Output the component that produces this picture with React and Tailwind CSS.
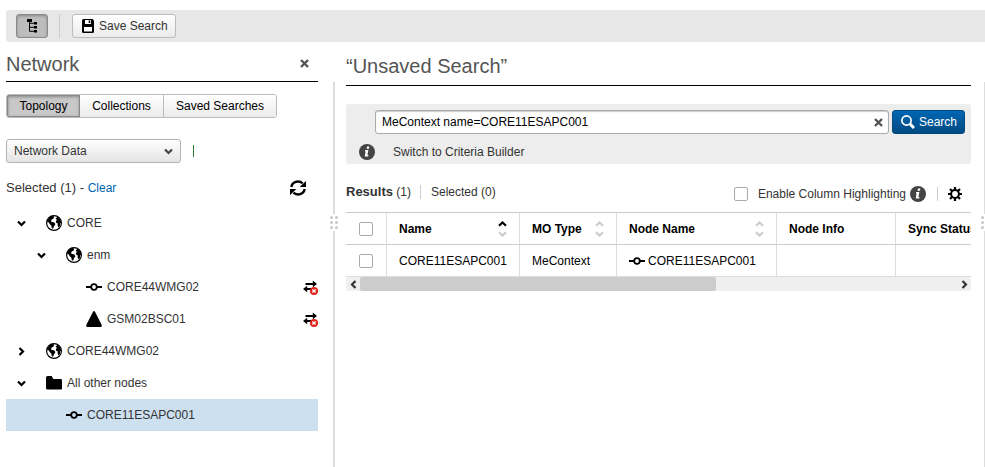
const Globe = () => (
  <svg width="16" height="16" viewBox="0 0 16 16" className="shrink-0" aria-hidden="true">
    <circle cx="8" cy="8" r="7.4" fill="#fff" stroke="#000" strokeWidth="1.2" />
    <path d="M1.6 5 L3.4 2.2 L6.2 .8 L8.2 1.6 L7.6 3.4 L5.8 4.6 L4.8 6.2 L6.2 7 L8.4 7.6 L9.4 9.2 L8 11.2 L7.2 13.6 L5.8 13.4 L5.4 10.8 L3.8 9.2 L2.6 7.2 L1 7 Z" />
    <path d="M9.6 3.6 L11.6 1.8 L14.4 4.4 L15.2 7.2 L14.2 8.4 L14 11 L12.6 12.6 L11.6 10.4 L11.8 8.6 L10.2 7.8 L9.8 6 L11 5 Z" />
  </svg>
);

const NodeIcon = () => (
  <svg width="16" height="16" viewBox="0 0 16 16" className="shrink-0" fill="none" stroke="#000" aria-hidden="true">
    <path d="M0 8h5M11 8h5" strokeWidth="1.8" />
    <circle cx="8" cy="8" r="2.8" strokeWidth="1.8" />
  </svg>
);

const Triangle = () => (
  <svg width="16" height="16" viewBox="0 0 16 16" className="shrink-0" aria-hidden="true">
    <path d="M7 .8Q8-.6 9 .8L15.5 13.6Q16.2 16 14.8 16H1.2Q-.2 16 .5 13.6Z" />
  </svg>
);

const Folder = () => (
  <svg width="16" height="16" viewBox="0 0 16 16" className="shrink-0" aria-hidden="true">
    <path d="M0 2.6Q0 1 1.6 1H5.6L7.4 4H14.6Q16 4 16 5.4V13.4Q16 14.6 14.4 14.6H1.6Q0 14.6 0 13Z" />
  </svg>
);

const Chevron = ({ d = "M1 2.5 4.5 6 8 2.5", color = "#000" }) => (
  <svg width="9" height="9" viewBox="0 0 9 9" className="shrink-0" fill="none" stroke={color} strokeWidth="2.2" aria-hidden="true">
    <path d={d} />
  </svg>
);
const RIGHT = "M2.5 1 6 4.5 2.5 8";
const LEFT = "M6.5 1 3 4.5 6.5 8";

const Cross = () => (
  <svg width="9" height="9" viewBox="0 0 9 9" fill="none" stroke="#555" strokeWidth="2.4" aria-hidden="true">
    <path d="M1 1 8 8M8 1 1 8" />
  </svg>
);

const SyncError = () => (
  <svg width="16" height="18" viewBox="0 0 16 18" className="shrink-0" aria-label="Not synchronized" role="img">
    <path d="M3.5 5h7.3V2.6L15 6l-4.2 3.3V7H3.5zM12 10H5.2V7.8L1 11l4.2 3.2V12H12z" />
    <circle cx="12" cy="13" r="4" fill="#e32119" />
    <path d="M10.4 11.4 13.6 14.6M13.6 11.4 10.4 14.6" stroke="#fff" strokeWidth="1.4" />
  </svg>
);

const Info = () => (
  <svg width="16" height="16" viewBox="0 0 16 16" className="shrink-0" aria-label="Information" role="img">
    <circle cx="8" cy="8" r="8" fill="#444" />
    <path d="M8 2.6h2.4l-.4 2.2H7.6zM6.2 6h3.2l-1 5h1.1l-.3 1.6H5.7l.9-5H5.9z" fill="#fff" />
  </svg>
);

const Grip = () => (
  <div className="grid shrink-0 grid-cols-2 gap-[2px] py-[2px]">
    {[0, 1, 2, 3, 4, 5].map((i) => (
      <span key={i} className="size-[3px] rounded-full bg-[#c8c8c8]" />
    ))}
  </div>
);

const Splitter = () => (
  <div className="flex w-2 shrink-0 flex-col items-center">
    <div className="h-[132px] w-[2px] bg-[#ddd]" />
    <Grip />
    <div className="w-[2px] grow bg-[#ddd]" />
  </div>
);

const Check = ({ label }) => (
  <input
    type="checkbox"
    aria-label={label}
    className="block size-[14px] shrink-0 appearance-none rounded-[2px] border border-[#aaa] bg-white"
  />
);

const ICONS = { globe: Globe, node: NodeIcon, triangle: Triangle, folder: Folder };

const TREE = [
  { name: "CORE", icon: "globe", pad: "pl-[11px]", arrow: "down" },
  { name: "enm", icon: "globe", pad: "pl-[31px]", arrow: "down" },
  { name: "CORE44WMG02", icon: "node", pad: "pl-[51px]", error: true },
  { name: "GSM02BSC01", icon: "triangle", pad: "pl-[51px]", error: true },
  { name: "CORE44WMG02", icon: "globe", pad: "pl-[11px]", arrow: "right" },
  { name: "All other nodes", icon: "folder", pad: "pl-[11px]", arrow: "down" },
  { name: "CORE11ESAPC001", icon: "node", pad: "pl-[31px]", selected: true },
];

function TreeRow({ item }) {
  const Icon = ICONS[item.icon];
  return (
    <li className={`flex h-8 items-center ${item.pad} ${item.selected ? "bg-[#cde0f0]" : ""}`}>
      {item.arrow ? (
        <button type="button" aria-label={`Toggle ${item.name}`} className="mr-5 shrink-0">
          <Chevron d={item.arrow === "right" ? RIGHT : undefined} />
        </button>
      ) : (
        <span className="mr-5 w-[9px] shrink-0" />
      )}
      <Icon />
      <span className="ml-[5px] grow">{item.name}</span>
      {item.error && <SyncError />}
    </li>
  );
}

const Sort = ({ asc }) => (
  <svg width="9" height="16" viewBox="0 0 9 16" className="shrink-0" fill="none" strokeWidth="2.2" aria-hidden="true">
    <path d="M1 4.8 4.5 1.5 8 4.8" stroke={asc ? "#000" : "#ccc"} />
    <path d="M1 11.2 4.5 14.5 8 11.2" stroke="#ccc" />
  </svg>
);

const COLUMNS = [
  { name: "Name", sort: true, asc: true },
  { name: "MO Type", sort: true },
  { name: "Node Name", sort: true },
  { name: "Node Info" },
  { name: "Sync Status" },
];

function Sidebar() {
  return (
    <aside className="mr-3 w-[312px] shrink-0">
      <div className="flex h-10 items-center justify-between border-b border-black pt-1 pr-[9px]">
        <h1 className="text-xl leading-6 text-[#555]">Network</h1>
        <button type="button" aria-label="Close"><Cross /></button>
      </div>
      <div className="mt-3 flex h-6 w-[271px] overflow-hidden rounded-[3px] border border-[#bbb] text-black">
        <button type="button" className="w-[73px] border border-[#888] bg-[#c8c8c8] shadow-[inset_0_1px_3px_#888]">Topology</button>
        <button type="button" className="w-[84px] border-r border-[#bbb] bg-linear-to-b from-white to-[#ebebeb]">Collections</button>
        <button type="button" className="grow bg-linear-to-b from-white to-[#ebebeb]">Saved Searches</button>
      </div>
      <div className="mt-[21px] flex items-center">
        <div className="grid w-[175px] items-center">
          <select aria-label="Network data" className="col-start-1 row-start-1 h-6 w-full appearance-none rounded-[3px] border border-[#b3b3b3] bg-linear-to-b from-white to-[#e4e4e4] pl-[7px]">
            <option>Network Data</option>
          </select>
          <span className="pointer-events-none col-start-1 row-start-1 mr-2 justify-self-end"><Chevron color="#444" /></span>
        </div>
        <span className="ml-3 h-3 w-px bg-[#2f7d32]" />
      </div>
      <div className="mt-4 flex h-[18px] items-center justify-between pr-3">
        <p className="text-[13px]">Selected (1) - <a href="#clear" className="text-xs text-[#0066b3]">Clear</a></p>
        <button type="button" aria-label="Refresh">
          <svg width="16" height="16" viewBox="0 0 16 16" aria-hidden="true">
            <path d="M1.4 7A6.6 6 0 0 1 12.6 3.3" fill="none" stroke="#000" strokeWidth="2.4" />
            <path d="M16 1V7H9.6z" />
            <path d="M14.6 9A6.6 6 0 0 1 3.4 12.7" fill="none" stroke="#000" strokeWidth="2.4" />
            <path d="M0 15V9H6.4z" />
          </svg>
        </button>
      </div>
      <ul className="mt-[10px]">
        {TREE.map((item, i) => <TreeRow key={i} item={item} />)}
      </ul>
    </aside>
  );
}

function Results() {
  return (
    <main className="mr-[10px] ml-2 min-w-0 grow">
      <div className="flex h-11 items-center border-b border-black pt-1">
        <h2 className="text-xl leading-6 text-[#555]">“Unsaved Search”</h2>
      </div>
      <form className="mt-[18px] h-[60px] rounded-[3px] bg-[#ededed] pt-[6px] pr-[6px]" onSubmit={(e) => e.preventDefault()}>
        <div className="flex gap-[3px] pl-[29px]">
          <div className="flex h-6 grow items-center rounded-[3px] border border-[#aaa] bg-white pr-[5px] shadow-[inset_0_1px_1px_#ccc]">
            <input aria-label="Search query" defaultValue="MeContext name=CORE11ESAPC001" className="min-w-0 grow bg-transparent pl-[6px] text-black outline-none" />
            <button type="button" aria-label="Clear search"><Cross /></button>
          </div>
          <button type="submit" className="flex h-6 w-[73px] items-center gap-1 rounded-[3px] border border-[#004a80] bg-linear-to-b from-[#0066b3] to-[#004a82] pl-2 text-white">
            <svg width="14" height="14" viewBox="0 0 14 14" fill="none" stroke="#fff" aria-hidden="true">
              <circle cx="5.5" cy="5.5" r="4.6" strokeWidth="1.7" />
              <path d="M8.8 8.8 13 13" strokeWidth="3" />
            </svg>
            Search
          </button>
        </div>
        <div className="mt-[10px] flex items-center gap-[18px] pl-[13px]">
          <Info />
          <a href="#criteria">Switch to Criteria Builder</a>
        </div>
      </form>
      <div className="mt-[18px] flex h-[30px] items-center pb-[6px]">
        <p className="pb-1"><b className="text-[13px]">Results</b> (1)</p>
        <span className="mr-[10px] ml-[9px] mb-1 h-[14px] w-px bg-[#ccc]" />
        <p className="grow pb-1">Selected (0)</p>
        <label className="flex items-center gap-[10px]"><Check />Enable Column Highlighting</label>
        <span className="ml-1"><Info /></span>
        <span className="mr-[10px] ml-[11px] h-[14px] w-px bg-[#ccc]" />
        <button type="button" aria-label="Table settings" className="mr-[9px]">
          <svg width="14" height="14" viewBox="0 0 14 14" fill="none" stroke="#000" aria-hidden="true">
            <circle cx="7" cy="7" r="3.9" strokeWidth="2" />
            <path d="M7 0v3M7 11v3M0 7h3M11 7h3M2 2l2 2M10 10l2 2M12 2l-2 2M4 10l-2 2" strokeWidth="2.2" />
          </svg>
        </button>
      </div>
      <div className="overflow-hidden">
        <table className="w-[680px] table-fixed border-separate border-spacing-0 border-t border-[#ccc] text-left text-black">
          <colgroup>
            <col className="w-[41px]" />
            <col className="w-[133px]" />
            <col className="w-[97px]" />
            <col className="w-[160px]" />
            <col className="w-[119px]" />
            <col />
          </colgroup>
          <thead>
            <tr className="h-8">
              <th className="border-r border-b border-r-[#ddd] border-b-[#ccc] pl-[13px]"><Check label="Select all" /></th>
              {COLUMNS.map((c) => (
                <th key={c.name} className="border-r border-b border-r-[#ddd] border-b-[#ccc] pr-3 pl-3">
                  <span className="flex items-center justify-between whitespace-nowrap">{c.name}{c.sort && <Sort asc={c.asc} />}</span>
                </th>
              ))}
            </tr>
          </thead>
          <tbody>
            <tr className="h-8">
              <td className="border-r border-b border-[#ddd] pl-[13px]"><Check label="Select CORE11ESAPC001" /></td>
              <td className="border-r border-b border-[#ddd] pl-3">CORE11ESAPC001</td>
              <td className="border-r border-b border-[#ddd] pl-3">MeContext</td>
              <td className="border-r border-b border-[#ddd] pl-3">
                <span className="flex items-center gap-[3px]"><NodeIcon />CORE11ESAPC001</span>
              </td>
              <td className="border-r border-b border-[#ddd]" />
              <td className="border-r border-b border-[#ddd]" />
            </tr>
          </tbody>
        </table>
      </div>
      <div className="flex h-[14px] items-center rounded-[2px] bg-[#efefef]">
        <button type="button" aria-label="Scroll left" className="flex w-[14px] justify-center"><Chevron d={LEFT} color="#333" /></button>
        <div className="h-full w-[57%] rounded-[2px] bg-[#ccc]" />
        <button type="button" aria-label="Scroll right" className="mr-[2px] ml-auto"><Chevron d={RIGHT} color="#333" /></button>
      </div>
    </main>
  );
}

export default function App() {
  return (
    <div className="flex min-h-screen flex-col overflow-hidden bg-white pt-[10px] pl-[6px] font-['Liberation_Sans',Arial,sans-serif] text-xs leading-4 text-[#333]">
      <header className="flex h-8 items-center rounded-l-[3px] bg-[#e7e7e7] pl-[10px]">
        <button type="button" aria-label="Topology tree" className="flex h-6 w-8 items-center justify-center rounded-[3px] border border-[#8a8a8a] bg-[#bdbdbd] shadow-[inset_0_1px_3px_#888]">
          <svg width="12" height="14" viewBox="0 0 12 14" aria-hidden="true">
            <path d="M1 0h5v3H1zM8 3h3v2.6H8zM8 7h3v2.6H8zM8 11h3v2.6H8z" />
            <path d="M3.5 3v9.3H8M3.5 4.3H8M3.5 8.3H8" fill="none" stroke="#000" />
          </svg>
        </button>
        <span className="mr-3 ml-[11px] h-6 w-px bg-[#ccc]" />
        <button type="button" className="flex h-6 w-[104px] items-center gap-[5px] rounded-[3px] border border-[#bbb] bg-linear-to-b from-white to-[#ebebeb] pl-[9px]">
          <svg width="12" height="14" viewBox="0 0 12 14" aria-hidden="true">
            <path d="M1.5 0H10.5L12 1.5V12.5Q12 14 10.5 14H1.5Q0 14 0 12.5V1.5Q0 0 1.5 0Z" />
            <path d="M3 1h6v4H3zM2 8h8v4.5H2z" fill="#fff" />
            <path d="M6.7 1.4h1.6v2.6H6.7z" />
          </svg>
          Save Search
        </button>
      </header>
      <div className="flex grow">
        <Sidebar />
        <div className="flex pt-10"><Splitter /></div>
        <Results />
        <div className="flex w-1 shrink-0 pt-10"><Splitter /></div>
      </div>
    </div>
  );
}
